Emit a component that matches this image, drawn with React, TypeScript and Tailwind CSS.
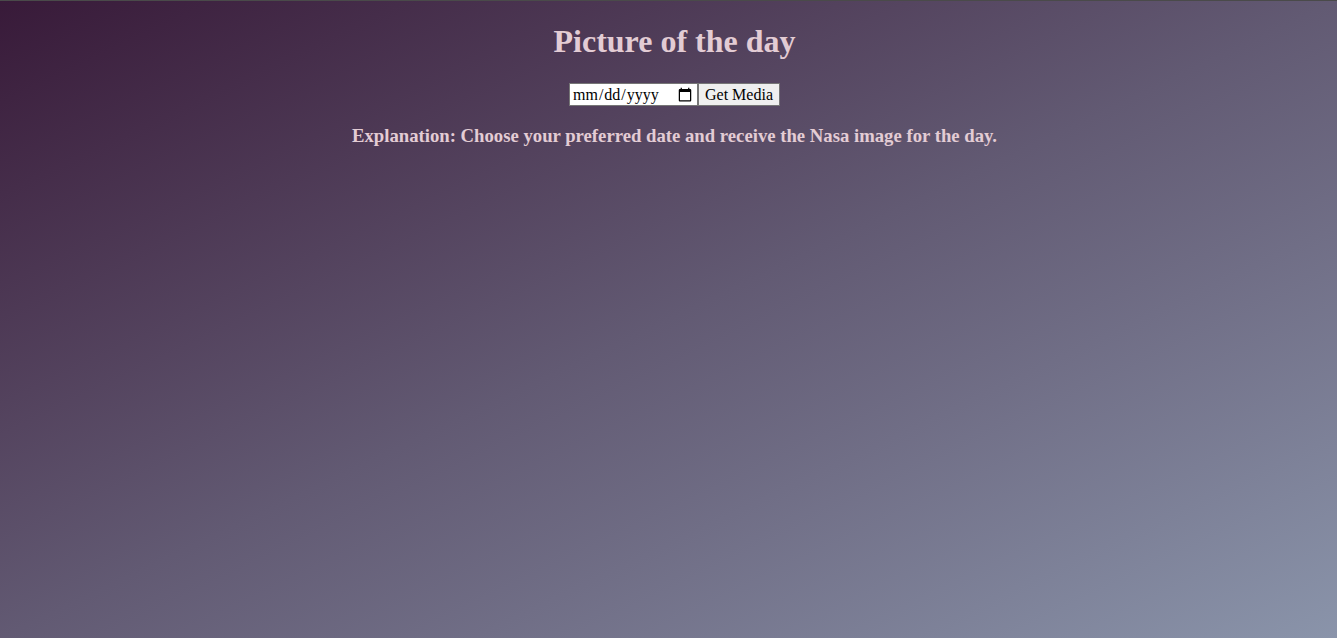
export default function App() {
  return (
    <div className="min-h-screen border-t border-[#4a4a4a] bg-gradient-to-br from-[#381a39] via-[#625a73] to-[#8a94aa] pl-[12px] text-center font-['Liberation_Serif',serif] text-[#e3ccd4]">
      <h1 className="pt-[22px] text-[32px] font-bold leading-[37px]">Picture of the day</h1>
      <div className="mt-[23px] flex items-center justify-center">
        <input
          type="date"
          className="h-[23px] w-[129px] border border-[#767676] bg-white px-[2px] text-[16px] leading-[19px] text-black"
        />
        <button className="h-[23px] border border-[#767676] bg-[#efefef] px-[6px] text-[16px] leading-[19px] text-black">
          Get Media
        </button>
      </div>
      <h3 className="mt-[19px] text-[18.72px] font-bold leading-[22px]">
        Explanation: Choose your preferred date and receive the Nasa image for the day.
      </h3>
    </div>
  );
}
